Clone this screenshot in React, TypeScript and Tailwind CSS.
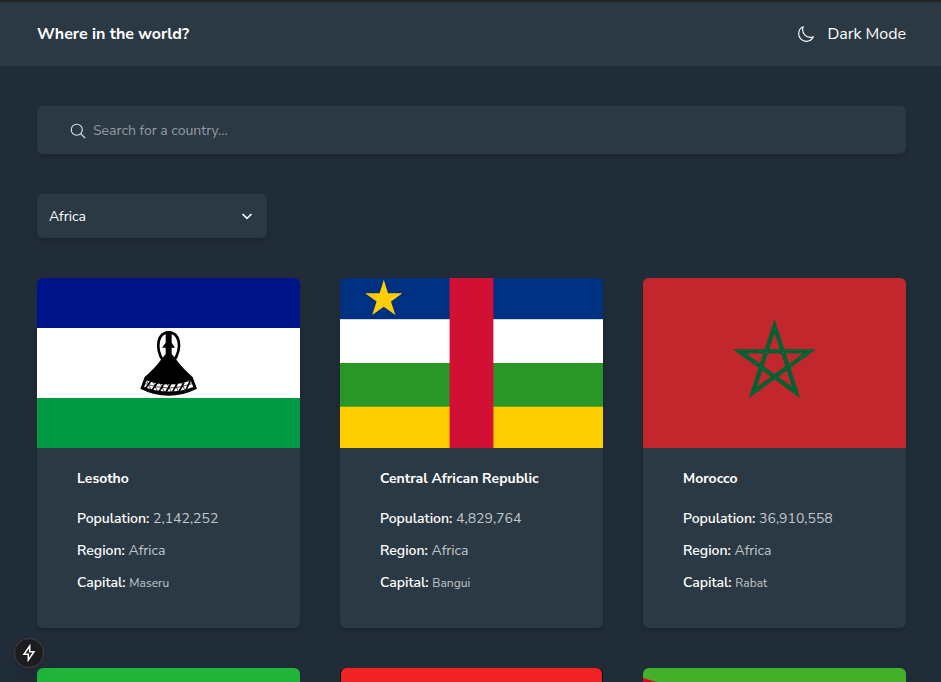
import type { ReactNode } from "react";
import { IoMoonOutline, IoSearchOutline } from "react-icons/io5";

type Country = { name: string; population: string; region: string; capital: string; flag: ReactNode };

const flagClass = "block h-[170px] w-full rounded-t-md";

function Lesotho() {
  return (
    <svg className={flagClass} viewBox="0 0 263 170" preserveAspectRatio="none" role="img" aria-label="Flag of Lesotho">
      <rect width="263" height="50" fill="#001489" />
      <rect y="50" width="263" height="70" fill="#fff" />
      <rect y="120" width="263" height="50" fill="#009a44" />
      <g transform="translate(83 42) scale(.33333)">
        <path d="M130 124C117 104 112 84 116 64Q122 37 146 37Q170 37 176 64C180 84 174 104 161 124" fill="none" stroke="#000" strokeWidth="8" />
        <path d="M137 34H155V68L165 83H155V102L168 118Q187 145 218 171L231 206Q190 227 146 227Q102 227 61 206L74 171Q105 145 124 118L137 102V83H126L137 68Z" fill="#000" />
        <path d="M76 191Q110 204 146 204Q182 204 216 191" fill="none" stroke="#fff" strokeWidth="21" />
        <path d="M76 191Q110 204 146 204Q182 204 216 191" fill="none" stroke="#000" strokeWidth="2" />
        <path d="M76 206L92 184M96 211L112 188M117 215L132 191M138 216L152 192M158 215L172 190M178 213L192 188M198 210L211 182" stroke="#000" strokeWidth="5" />
        <path d="M80 182L92 208M100 187L112 214M121 191L133 216M142 192L154 216M164 190L175 214M184 188L195 211" stroke="#000" strokeWidth="2" />
      </g>
    </svg>
  );
}

function CentralAfricanRepublic() {
  return (
    <svg className={flagClass} viewBox="0 0 263 170" preserveAspectRatio="none" role="img" aria-label="Flag of the Central African Republic">
      <rect width="263" height="170" fill="#003082" />
      <rect y="41.2" width="263" height="129" fill="#fff" />
      <rect y="85" width="263" height="85" fill="#289728" />
      <rect y="128.7" width="263" height="42" fill="#ffce00" />
      <rect x="109.6" width="43.8" height="170" fill="#d21034" />
      <path d="M43.8 1.8L48 15.3H62.4L51 23.4L55.4 36.9L43.8 28.7L32.2 36.9L36.6 23.4L25.2 15.3H39.6Z" fill="#ffce00" />
    </svg>
  );
}

function Morocco() {
  return (
    <svg className={flagClass} viewBox="0 0 263 170" preserveAspectRatio="none" role="img" aria-label="Flag of Morocco">
      <rect width="263" height="170" fill="#c1272d" />
      <path d="M131.5 48L153.2 114.5L96.5 73.4H166.5L109.8 114.5Z" fill="none" stroke="#006233" strokeWidth="4.3" strokeMiterlimit="10" />
    </svg>
  );
}

const countries: Country[] = [
  { name: "Lesotho", population: "2,142,252", region: "Africa", capital: "Maseru", flag: <Lesotho /> },
  { name: "Central African Republic", population: "4,829,764", region: "Africa", capital: "Bangui", flag: <CentralAfricanRepublic /> },
  { name: "Morocco", population: "36,910,558", region: "Africa", capital: "Rabat", flag: <Morocco /> },
];

function CountryCard({ country }: { country: Country }) {
  return (
    <article className="rounded-md bg-[#2b3944] shadow-md shadow-black/10">
      {country.flag}
      <div className="px-10 pt-5 pb-[34px] text-sm leading-[22px] text-white">
        <h2 className="mb-[18px] font-bold">{country.name}</h2>
        <div className="flex flex-col gap-2.5">
          <p><span className="font-semibold">Population: </span><span className="text-[#c2c6ca]">{country.population}</span></p>
          <p><span className="font-semibold">Region: </span><span className="text-[#c2c6ca]">{country.region}</span></p>
          <p><span className="font-semibold">Capital: </span><span className="text-xs text-[#c2c6ca]">{country.capital}</span></p>
        </div>
      </div>
    </article>
  );
}

export default function App() {
  return (
    <div className="h-screen overflow-hidden bg-[#202c37] font-['Nunito_Sans','Nunito','Lato',sans-serif] text-white">
      <header className="flex h-[66px] items-center justify-between border-t-2 border-[#252525] bg-[#2b3944] pr-[35px] pl-[37px]">
        <h1 className="text-base font-bold">Where in the world?</h1>
        <button type="button" className="flex items-center gap-3 text-base">
          <IoMoonOutline className="size-[18px]" />
          Dark Mode
        </button>
      </header>
      <main className="flex flex-col gap-10 pt-10 pr-[35px] pl-[37px]">
        <label className="flex h-12 items-center gap-1.5 rounded-md bg-[#2b3944] px-8 pt-0.5 shadow-md shadow-black/10">
          <IoSearchOutline className="size-[18px] shrink-0 text-[#e0e2e4]" />
          <input type="text" aria-label="Search for a country" placeholder="Search for a country..." className="min-w-0 flex-1 bg-transparent text-sm text-white outline-none placeholder:text-[#949ba3]" />
        </label>
        <div className="relative w-[230px] rounded-md shadow-md shadow-black/10">
          <select aria-label="Region" defaultValue="Africa" className="block h-11 w-full appearance-none rounded-md bg-[#2b3944] px-3 pt-0.5 text-sm text-white outline-none">
            <option>Africa</option>
          </select>
          <svg className="pointer-events-none absolute top-3.5 right-3 size-4" viewBox="0 0 16 16" fill="none" stroke="currentColor" strokeWidth="1.6" aria-hidden="true">
            <path d="M3.5 6L8 10.3L12.5 6" />
          </svg>
        </div>
        <div className="grid grid-cols-3 gap-10">
          {countries.map((country) => <CountryCard key={country.name} country={country} />)}
          <div className="h-[170px] rounded-t-md bg-[#21b53a]" />
          <div className="h-[170px] rounded-t-md border-x border-black bg-[#f02224]" />
          <svg className={flagClass} viewBox="0 0 263 170" preserveAspectRatio="none" aria-hidden="true">
            <rect width="263" height="170" fill="#43b02a" />
            <path d="M0 10L110 42L0 170Z" fill="#e4002b" />
          </svg>
        </div>
      </main>
      <button type="button" aria-label="Open developer tools" className="fixed bottom-3.5 left-3.5 flex size-[30px] items-center justify-center rounded-full border border-[#414141] bg-[#1c1c1e] shadow-xl">
        <svg className="h-[18px] w-4" viewBox="0 0 16 18" fill="none" stroke="#fff" strokeWidth="1.5" aria-hidden="true">
          <path d="M8.7 2L3 10.2H7.3V16L13 7.8H8.7Z" />
        </svg>
      </button>
    </div>
  );
}
